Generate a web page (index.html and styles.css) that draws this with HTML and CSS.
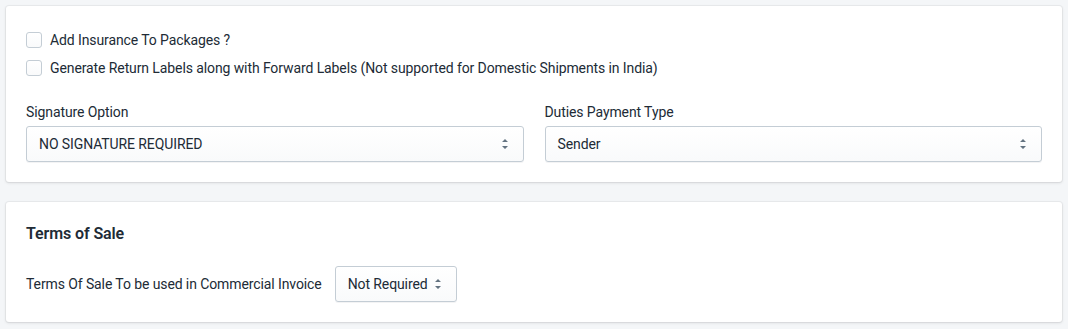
FILE: index.html
```html
<!DOCTYPE html>
<html lang="en">
<head>
    <meta charset="UTF-8">
    <title>Shipping Options</title>
    <link rel="stylesheet" href="styles.css">
</head>
<body>
    <div class="card">
        <div class="choices">
            <label class="choice">
                <input type="checkbox">
                <span class="box"></span>
                <span>Add Insurance To Packages ?</span>
            </label>
            <label class="choice">
                <input type="checkbox">
                <span class="box"></span>
                <span>Generate Return Labels along with Forward Labels (Not supported for Domestic Shipments in India)</span>
            </label>
        </div>

        <div class="form-row">
            <div class="field">
                <label class="field-label">Signature Option</label>
                <div class="select">
                    <span>NO SIGNATURE REQUIRED</span>
                    <svg viewBox="0 0 20 20" class="arrows"><path d="M10 5l3 3H7zM10 15l-3-3h6z"/></svg>
                </div>
            </div>
            <div class="field">
                <label class="field-label">Duties Payment Type</label>
                <div class="select">
                    <span>Sender</span>
                    <svg viewBox="0 0 20 20" class="arrows"><path d="M10 5l3 3H7zM10 15l-3-3h6z"/></svg>
                </div>
            </div>
        </div>
    </div>

    <div class="card">
        <h2>Terms of Sale</h2>
        <div class="inline-row">
            <span>Terms Of Sale To be used in Commercial Invoice</span>
            <div class="select">
                <span>Not Required</span>
                <svg viewBox="0 0 20 20" class="arrows"><path d="M10 5l3 3H7zM10 15l-3-3h6z"/></svg>
            </div>
        </div>
    </div>
</body>
</html>
```

FILE: styles.css
```css
body {
    margin: 0;
    padding: 6px;
    display: flex;
    flex-direction: column;
    gap: 20px;
    background: #f4f6f8;
    font-family: Roboto, "Noto Sans", sans-serif;
    font-size: 14px;
    line-height: 20px;
    letter-spacing: -0.1px;
    color: #212b36;
}
.card {
    background: white;
    border-radius: 3px;
    box-shadow: 0 0 0 1px rgba(63,63,68,0.05), 0 1px 3px 0 rgba(63,63,68,0.15);
    padding: 20px;
}
.choices {
    margin-bottom: 20px;
}
.choice {
    display: flex;
    align-items: center;
    padding: 4px 0;
}
.choice input {
    display: none;
}
.box {
    width: 16px;
    height: 16px;
    box-sizing: border-box;
    border: 1px solid #c4cdd5;
    border-radius: 3px;
    background: linear-gradient(180deg, #fff, #f9fafb);
    margin-right: 8px;
}
.form-row {
    display: grid;
    grid-template-columns: 1fr 1fr;
    gap: 21px;
}
.field-label {
    display: block;
    margin-bottom: 4px;
}
.select {
    display: flex;
    align-items: center;
    justify-content: space-between;
    height: 36px;
    box-sizing: border-box;
    padding: 0 8px 0 12px;
    border: 1px solid #c4cdd5;
    border-radius: 3px;
    background: linear-gradient(180deg, #fff, #f9fafb);
    box-shadow: 0 1px 0 0 rgba(22,29,37,0.05);
}
.arrows {
    width: 20px;
    height: 20px;
    fill: #637381;
}
h2 {
    margin: 0 0 20px;
    font-size: 16px;
    line-height: 24px;
    font-weight: 600;
}
.inline-row {
    display: flex;
    align-items: center;
    gap: 13px;
}
```
